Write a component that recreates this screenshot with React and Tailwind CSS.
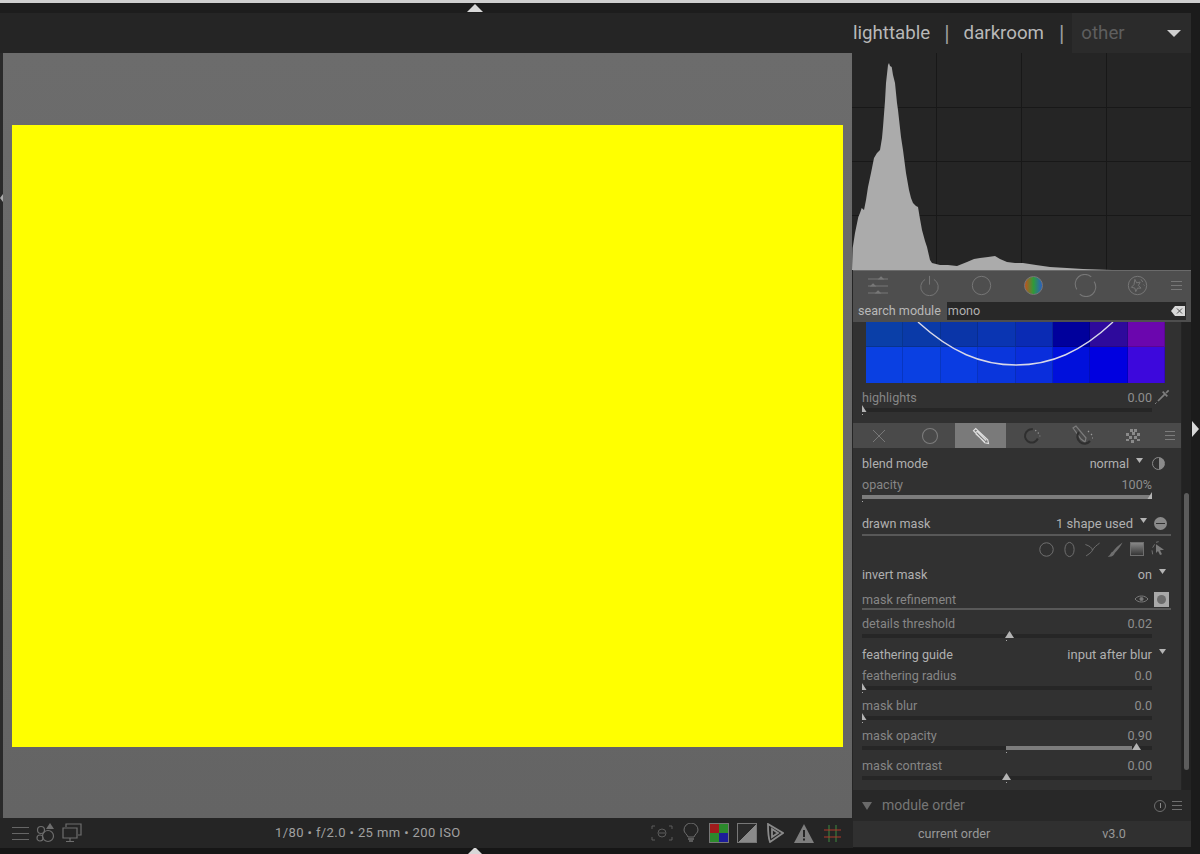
import React from "react";

const ROW1 = ["#0a3fa8", "#0a3aa8", "#0a35a8", "#0a35b2", "#0a2bb4", "#00009c", "#2e0a9c", "#6b06ae"];
const ROW2 = ["#0a40e2", "#0a40e2", "#0a3ce2", "#0a36dc", "#0a2edc", "#0010dc", "#0000e0", "#3d08dc"];

const HIST =
    "M0 217 L0.7 195 L3 180 L6.3 164 L8 160 L9.7 155 L12 157 L14 147 L16 134 L19 120 L22 105 L25 100 L28 97 L30 85 L31 74 L33 48 L34 30 L36 12 L37 10 L38 13 L39.7 14 L41 22 L43 30 L45 50 L46 57 L49 84 L51 97 L54 120 L57 137 L59 145 L61 150 L64 153 L66 154 L68 166 L70 177 L73 188 L75 194 L78 207 L80 210 L84 211 L88 212 L96 212 L105 213 L110 211 L115 209 L122 206 L128 205 L136 204 L143 203 L148 206 L155 209 L163 210 L171 210 L184 212 L198 214 L215 215 L231 216 L260 217 Z";

function Icon({ size = 24, color = "#777", children, fill = "none", sw = 1.2 }) {
    return (
        <svg width={size} height={size} viewBox="0 0 24 24" fill={fill} stroke={color} strokeWidth={sw}>
            {children}
        </svg>
    );
}

function Burger({ color = "#777", width = 11 }) {
    return (
        <div className="flex flex-col gap-[3px]" style={{ width }}>
            <div className="h-[1px]" style={{ backgroundColor: color }} />
            <div className="h-[1px]" style={{ backgroundColor: color }} />
            <div className="h-[1px]" style={{ backgroundColor: color }} />
        </div>
    );
}

function Slider({ label, value, pos, from, to }) {
    const atStart = pos === 0;
    const atEnd = pos === 100;
    const origin = atStart || atEnd ? 0 : 49.8;
    const left = atStart ? "0px" : atEnd ? "calc(100% - 9px)" : `calc(${pos}% - 4.5px)`;
    return (
        <div className="h-[30px] w-[290px] ml-[9px] shrink-0">
            <div className="h-[21px] flex items-center justify-between text-[#868686] pt-[1px]">
                <span>{label}</span>
                <span className="text-[#8e8e8e]">{value}</span>
            </div>
            <div className="relative h-[4px] bg-[#262626]">
                {from !== undefined && (
                    <div
                        className="absolute top-0 h-[4px] bg-[#7c7c7c]"
                        style={{ left: `${from}%`, width: `${to - from}%` }}
                    />
                )}
                <svg className="absolute top-[-3px]" style={{ left }} width="9" height="7" viewBox="0 0 9 7">
                    <path d={atStart ? "M0 0 L4.5 7 L0 7 Z" : atEnd ? "M4.5 7 L9 0 L9 7 Z" : "M4.5 0 L9 7 L0 7 Z"} fill="#b4b4b4" />
                </svg>
                <div className="absolute top-[6px] w-[1px] h-[1px] bg-[#aaa]" style={{ left: `${origin}%` }} />
            </div>
        </div>
    );
}

function Caret({ className }) {
    return (
        <svg className={className} width="7" height="6" viewBox="0 0 7 6">
            <path d="M0 0 H7 L3.5 5 Z" fill="#b4b4b4" />
        </svg>
    );
}

function ModuleTabs() {
    const c = "#7c7c7c";
    return (
        <div className="h-[25px] w-[328px] flex bg-[#4a4a4a] mt-[6px] shrink-0">
            <div className="w-[51px] flex items-center justify-center">
                <Icon size={16} color={c}><path d="M3 3 L21 21 M21 3 L3 21" strokeWidth="1.4" /></Icon>
            </div>
            <div className="w-[51px] flex items-center justify-center">
                <Icon size={18} color={c}><circle cx="12" cy="12" r="10" strokeWidth="1.4" /></Icon>
            </div>
            <div className="w-[51px] flex items-center justify-center bg-[#7a7a7a]">
                <Icon size={18} color="#e0e0e0" sw={1.5}>
                    <path d="M2 5 L5 2 L21 17 L22 22 L17 21 Z M4 8 L8 5 M7 6 L19 18 M5 9 L17 20" />
                </Icon>
            </div>
            <div className="w-[51px] flex items-center justify-center">
                <Icon size={20} color="#2f2f2f" sw={2.4}>
                    <path d="M13 4 A8 8 0 1 0 19 15" />
                    <path d="M16 5 L17 6 M19 8 L20 9 M21 12 L22 12" stroke="#9a9a9a" strokeWidth="1.4" />
                </Icon>
            </div>
            <div className="w-[51px] flex items-center justify-center">
                <Icon size={24} color={c} sw={1.2}>
                    <path d="M2 4 L5 2 L15 14 L14 18 L10 15 Z" />
                    <path d="M8 8 A7 7 0 1 0 19 17" stroke="#2f2f2f" strokeWidth="2.2" />
                    <path d="M17 7 L18 8 M20 10 L21 11 M21 14 L22 14" stroke="#9a9a9a" />
                </Icon>
            </div>
            <div className="w-[51px] flex items-center justify-center pr-[2px]">
                <svg width="16" height="16" viewBox="0 0 16 16" fill="#8a8a8a">
                    <rect x="5" y="1" width="3" height="3" />
                    <rect x="9" y="1" width="3" height="3" />
                    <rect x="1" y="5" width="3" height="3" />
                    <rect x="7" y="4" width="3" height="3" />
                    <rect x="12" y="5" width="3" height="3" />
                    <rect x="4" y="8" width="3" height="3" />
                    <rect x="9" y="8" width="3" height="3" />
                    <rect x="1" y="11" width="3" height="2" />
                    <rect x="12" y="11" width="3" height="2" />
                    <rect x="6" y="12" width="3" height="3" />
                </svg>
            </div>
            <div className="flex-1 flex items-center pl-[6px]">
                <Burger color={c} width={10} />
            </div>
        </div>
    );
}

function MaskIcons() {
    const c = "#6f6f6f";
    return (
        <div className="h-[20px] mt-[3px] w-[309px] ml-[9px] flex items-center justify-end gap-[6px] pr-[5px] shrink-0">
            <Icon size={17} color={c}><circle cx="12" cy="12" r="9.5" strokeWidth="1.4" /></Icon>
            <Icon size={17} color={c}><ellipse cx="12" cy="12" rx="6.5" ry="10" strokeWidth="1.4" /></Icon>
            <Icon size={17} color={c}><path d="M2 5 C8 7 11 9 12 13 C14 9 18 6 22 3 M12 13 C11 16 6 19 3 21" strokeWidth="1.4" /></Icon>
            <Icon size={17} color={c}><path d="M22 2 C16 6 11 11 8 15 L11 17 C15 13 19 8 22 2 Z M8 15 C5 16 5 20 1 22 C6 23 10 21 11 17 Z" fill="#6f6f6f" stroke="none" /></Icon>
            <svg width="14" height="14" viewBox="0 0 14 14">
                <defs>
                    <linearGradient id="maskGrad" x1="0" y1="0" x2="0" y2="1">
                        <stop offset="0" stopColor="#8a8a8a" />
                        <stop offset="1" stopColor="#333" />
                    </linearGradient>
                </defs>
                <rect x="0.5" y="0.5" width="13" height="13" fill="url(#maskGrad)" stroke="#6f6f6f" />
            </svg>
            <Icon size={16} color={c}>
                <path d="M9 5 L21 13 L15 14 L18 20 L15 21 L12 15 L9 18 Z" fill="#7a7a7a" stroke="none" />
                <path d="M4 20 L3 14 M4 10 L7 5 M9 2 L13 1" strokeWidth="1.5" />
            </Icon>
        </div>
    );
}

function ModulePanel() {
    return (
        <div className="flex-1 min-h-0 flex">
            <div className="w-[328px] bg-[#313131] flex flex-col text-[12.6px] text-[#b0b0b0]">
                <div className="relative ml-[13px] w-[299px] shrink-0">
                    <div className="grid grid-cols-8 h-[25px]">
                        {ROW1.map((col, i) => (
                            <div key={i} className="border-r border-b border-[#00000026]" style={{ backgroundColor: col }} />
                        ))}
                    </div>
                    <div className="grid grid-cols-8 h-[36px]">
                        {ROW2.map((col, i) => (
                            <div key={i} className="border-r border-[#00000026]" style={{ backgroundColor: col }} />
                        ))}
                    </div>
                    <svg className="absolute left-0 top-0" width="299" height="61" viewBox="0 0 299 61" fill="none">
                        <path d="M52 0 C85 30 115 43 150 43 S215 30 247 0" stroke="#d8d8e8" strokeWidth="1.4" />
                    </svg>
                </div>

                <div className="mt-[4px] relative">
                    <Slider label="highlights" value="0.00" pos={0} />
                    <div className="absolute left-[301px] top-[2px]">
                        <Icon size={16} color="#7e7e7e" sw={2.6}>
                            <path d="M17 7 L6 18 M13 4 L20 11 M18 6 L22 2" />
                            <path d="M2 22 L3.5 20.5" stroke="#aaa" strokeWidth="1.5" />
                        </Icon>
                    </div>
                </div>

                <ModuleTabs />

                <div className="h-[20px] mt-[5px] ml-[9px] w-[309px] flex items-center pt-[2px] shrink-0">
                    <span>blend mode</span>
                    <span className="ml-auto">normal</span>
                    <Caret className="ml-[7px] mb-[7px]" />
                    <div className="ml-[9px] mr-[6px] mb-[2px] w-[13px] h-[13px] rounded-full border border-[#8a8a8a] bg-[linear-gradient(to_right,#313131_50%,#8a8a8a_50%)]" />
                </div>
                <div className="mt-[1px]">
                    <Slider label="opacity" value="100%" pos={100} from={0} to={100} />
                </div>

                <div className="h-[20px] mt-[9px] ml-[9px] w-[309px] flex items-center pt-[2px] shrink-0">
                    <span>drawn mask</span>
                    <span className="ml-auto text-[13px]">1 shape used</span>
                    <Caret className="ml-[7px] mb-[7px]" />
                    <div className="ml-[7px] mr-[4px] mb-[2px] w-[13px] h-[13px] rounded-full bg-[#8a8a8a] flex items-center justify-center">
                        <div className="w-[9px] h-[1px] bg-[#313131]" />
                    </div>
                </div>
                <div className="h-[2px] mt-[1px] ml-[9px] w-[309px] bg-[#585858] shrink-0" />

                <MaskIcons />

                <div className="h-[20px] mt-[5px] ml-[9px] w-[304px] flex items-center justify-end pt-[2px] shrink-0">
                    <span className="mr-auto">invert mask</span>
                    <span>on</span>
                    <Caret className="ml-[7px] mb-[7px]" />
                </div>

                <div className="h-[18px] mt-[6px] ml-[9px] w-[309px] flex items-center text-[#868686] shrink-0">
                    <span className="pt-[2px]">mask refinement</span>
                    <svg className="ml-auto" width="15" height="10" viewBox="0 0 15 10" fill="none" stroke="#7a7a7a">
                        <path d="M1 5 C4 1 11 1 14 5 C11 9 4 9 1 5 Z" />
                        <circle cx="7.5" cy="5" r="1.6" fill="#7a7a7a" />
                    </svg>
                    <div className="ml-[5px] mr-[2px] w-[15px] h-[15px] bg-[#a8a8a8] flex items-center justify-center">
                        <div className="w-[9px] h-[9px] rounded-full bg-[#6c6c6c]" />
                    </div>
                </div>
                <div className="h-[2px] ml-[9px] w-[309px] bg-[#585858] shrink-0" />

                <div className="mt-[3px]">
                    <Slider label="details threshold" value="0.02" pos={50.7} />
                </div>

                <div className="h-[20px] mt-[1px] ml-[9px] w-[304px] flex items-center justify-end pt-[2px] shrink-0">
                    <span className="mr-auto">feathering guide</span>
                    <span className="text-[13px]">input after blur</span>
                    <Caret className="ml-[7px] mb-[7px]" />
                </div>
                <div className="mt-[1px] flex flex-col">
                    <Slider label="feathering radius" value="0.0" pos={0} />
                    <Slider label="mask blur" value="0.0" pos={0} />
                    <Slider label="mask opacity" value="0.90" pos={94.8} from={49.8} to={93.1} />
                    <Slider label="mask contrast" value="0.00" pos={49.8} />
                </div>
            </div>
            <div className="w-[9px] ml-[1px] bg-[#222222] relative">
                <div className="absolute left-[2px] right-[2px] top-[171px] h-[277px] rounded-full bg-[#5c5c5c]" />
            </div>
            <div className="flex-1 bg-[#2a2a2a]" />
        </div>
    );
}

function TabBar() {
    const c = "#777";
    return (
        <div className="h-[30px] flex border-t border-[#6a6a6a]">
            <div className="w-[50px] flex items-center justify-center">
                <Icon size={24} color={c} sw={1.1}>
                    <path d="M2 5 H22 M2 12 H22 M2 19 H22" />
                    <path d="M15 3 L17 5 L13 5 Z M7 10 L9 12 L5 12 Z M12 17 L14 19 L10 19 Z" fill={c} />
                </Icon>
            </div>
            <div className="w-[52px] flex items-center justify-center">
                <Icon size={21} color={c} sw={1.1}>
                    <path d="M7 5 A10 10 0 1 0 17 5 M12 1 V11" />
                </Icon>
            </div>
            <div className="w-[52px] flex items-center justify-center">
                <Icon size={21} color={c} sw={1.1}><circle cx="12" cy="12" r="10.5" /></Icon>
            </div>
            <div className="w-[52px] flex items-center justify-center">
                <div className="w-[19px] h-[19px] rounded-full border border-[#777] bg-[linear-gradient(to_right,#c0521e,#2f9a3a_50%,#2a5fc0)]" />
            </div>
            <div className="w-[52px] flex items-center justify-center">
                <Icon size={23} color={c} sw={1.1}>
                    <path d="M3 16 A10 10 0 0 1 18 3 M21 8 A10 10 0 0 1 6 21" />
                </Icon>
            </div>
            <div className="w-[52px] flex items-center justify-center">
                <Icon size={21} color={c} sw={1.1}>
                    <circle cx="12" cy="12" r="10.5" />
                    <path d="M9 5 L11 9 L15 8 L13 12 L16 15 L12 15 L10 19 L9 15 L5 14 L8 11 Z" />
                    <path d="M16 5 L18 8 M19 11 L20 12" />
                </Icon>
            </div>
            <div className="flex-1 flex items-center pl-[8px]">
                <Burger color={c} width={11} />
            </div>
        </div>
    );
}

function RightPanel() {
    return (
        <div className="w-[339px] flex flex-col bg-[#252525]">
            <div className="h-[40px] flex items-center text-[18.7px] text-[#b8b8b8] shrink-0">
                <span className="ml-[1px]">lighttable</span>
                <span className="ml-[14px] text-[22px] text-[#a0a0a0] opacity-[0.99]">|</span>
                <span className="ml-[14px]">darkroom</span>
                <span className="ml-[15px] text-[22px] text-[#a0a0a0] opacity-[0.99]">|</span>
                <div className="ml-[8px] flex-1 h-full flex items-center bg-[#2b2b2b] text-[#5e5e5e] pl-[9px]">
                    <span>other</span>
                    <svg className="ml-auto mr-[10px]" width="14" height="7" viewBox="0 0 14 7">
                        <path d="M0 0 H14 L7 7 Z" fill="#cfcfcf" />
                    </svg>
                </div>
            </div>

            <div className="h-[217px] shrink-0">
                <svg width="339" height="217" viewBox="0 0 339 217" className="block">
                    <g stroke="#181818" strokeWidth="1">
                        <path d="M84.5 0 V217 M169.5 0 V217 M254.5 0 V217 M0 54.5 H339 M0 108.5 H339 M0 162.5 H339" />
                    </g>
                    <path d={HIST} fill="#ababab" />
                </svg>
            </div>

            <div className="bg-[#4e4e4e] shrink-0 ml-[1px] w-[338px]">
                <TabBar />
                <div className="h-[22px] flex items-center text-[12.6px] text-[#b8b8b8] pl-[5px]">
                    <span>search module</span>
                    <div className="ml-[6px] w-[239px] h-[18px] bg-[#282828] flex items-center pl-[1px] pr-[1px] text-[#b0b0b0]">
                        <span>mono</span>
                        <svg className="ml-auto" width="14" height="10" viewBox="0 0 14 10">
                            <path d="M0 5 L4 0 H14 V10 H4 Z" fill="#d8d8d8" />
                            <path d="M6 2.5 L11 7.5 M11 2.5 L6 7.5" stroke="#4e4e4e" />
                        </svg>
                    </div>
                </div>
            </div>

            <div className="flex-1 min-h-0 flex flex-col ml-[1px]">
                <ModulePanel />
                <div className="h-[31px] bg-[#282828] flex items-center shrink-0 text-[#767676]">
                    <svg className="ml-[9px]" width="10" height="8" viewBox="0 0 10 8">
                        <path d="M0 0 H10 L5 8 Z" fill="#6a6a6a" />
                    </svg>
                    <span className="ml-[10px] text-[14px]">module order</span>
                    <div className="ml-auto w-[12px] h-[12px] rounded-full border border-[#6e6e6e] flex items-center justify-center">
                        <div className="w-[1px] h-[5px] bg-[#8a8a8a]" />
                    </div>
                    <div className="ml-[6px] mr-[9px]">
                        <Burger color="#6e6e6e" width={10} />
                    </div>
                </div>
                <div className="h-[26px] bg-[#303030] flex items-center text-[12.6px] text-[#989898] shrink-0">
                    <span className="ml-[65px]">current order</span>
                    <span className="ml-[112px]">v3.0</span>
                </div>
                <div className="h-[1px] bg-[#1b1b1b] shrink-0" />
            </div>
        </div>
    );
}

function BottomIcons() {
    return (
        <div className="ml-auto flex items-center mr-[10px]">
            <svg width="22" height="16" viewBox="0 0 22 16" fill="none" stroke="#5c5c5c">
                <path d="M1 4 V1 H4 M18 1 H21 V4 M21 12 V15 H18 M4 15 H1 V12" />
                <circle cx="11" cy="8" r="4" />
                <path d="M8 8 H14" />
            </svg>
            <svg className="ml-[10px]" width="16" height="21" viewBox="0 0 16 21" fill="none" stroke="#6e6e6e">
                <path d="M5 14 C4 11 1 10 1 7 A7 7 0 0 1 15 7 C15 10 12 11 11 14 Z" />
                <path d="M5 16 H11 M6 18 H10" strokeWidth="1.5" />
            </svg>
            <div className="ml-[10px] w-[20px] h-[20px] border border-[#777] grid grid-cols-2">
                <div className="bg-[#a01c1c]" />
                <div className="bg-[#2c8a2c]" />
                <div className="bg-[#2c8a2c]" />
                <div className="bg-[#1c1c9a]" />
            </div>
            <div className="ml-[8px] w-[20px] h-[20px] border border-[#777] bg-[linear-gradient(to_bottom_right,#2a2a2a_50%,#8a8a8a_50%)]" />
            <svg className="ml-[10px]" width="17" height="20" viewBox="0 0 17 20" fill="none" stroke="#8a8a8a" strokeWidth="1.8">
                <path d="M1 1 L16 10 L3 19 C1 14 1 7 1 1 Z" />
                <path d="M5 6 L11 10 L5 14 Z" fill="#252525" />
            </svg>
            <svg className="ml-[10px]" width="20" height="19" viewBox="0 0 20 19">
                <path d="M10 0 L20 19 H0 Z" fill="#7e7e7e" />
                <path d="M9 6 H11 V13 H9 Z M9 14.5 H11 V16.5 H9 Z" fill="#252525" />
            </svg>
            <svg className="ml-[9px]" width="19" height="19" viewBox="0 0 19 19" fill="none">
                <path d="M6 1 V18 M13 1 V18" stroke="#3f8a3f" />
                <path d="M1 6 H18 M1 13 H18" stroke="#b03a2a" />
            </svg>
        </div>
    );
}

function BottomBar() {
    return (
        <div className="h-[30px] bg-[#252525] flex items-center relative shrink-0">
            <div className="ml-[12px] w-[17px]">
                <div className="flex flex-col gap-[5px]">
                    <div className="h-[1px] bg-[#666]" />
                    <div className="h-[1px] bg-[#666]" />
                    <div className="h-[1px] bg-[#666]" />
                </div>
            </div>
            <svg className="ml-[7px]" width="20" height="20" viewBox="0 0 20 20" fill="none" stroke="#6e6e6e" strokeWidth="1.2">
                <circle cx="5" cy="7" r="3.5" />
                <circle cx="4" cy="15" r="3" />
                <circle cx="12" cy="13" r="5.5" />
                <path d="M14 0 L18 6 H10 Z" fill="#6e6e6e" stroke="none" />
            </svg>
            <svg className="ml-[6px]" width="20" height="20" viewBox="0 0 20 20" fill="none" stroke="#6e6e6e" strokeWidth="1.2">
                <path d="M4 4 V1 H19 V12 H16 M1 5 H15 V15 H1 Z M8 15 V18 M4 18.5 H12" />
            </svg>
            <span className="absolute left-[275px] text-[13px] tracking-[0.4px] text-[#a0a0a0]">1/80 • f/2.0 • 25 mm • 200 ISO</span>
            <BottomIcons />
        </div>
    );
}

export default function App() {
    return (
        <div className="w-[1200px] h-[854px] bg-[#1b1b1b] flex flex-col overflow-hidden relative font-['Roboto',sans-serif]">
            <div className="h-[3px] bg-[#cfcfcf] shrink-0" />
            <div className="h-[10px] bg-[#1d1d1d] shrink-0 flex justify-center w-[950px]">
                <svg className="mt-[1px]" width="16" height="8" viewBox="0 0 16 8">
                    <path d="M8 0 L16 8 H0 Z" fill="#d8d8d8" />
                </svg>
            </div>

            <div className="flex h-[835px] shrink-0">
                <div className="w-[852px] flex flex-col shrink-0">
                    <div className="h-[40px] bg-[#252525] shrink-0" />
                    <div className="flex-1 min-h-0 flex">
                        <div className="w-[3px] bg-[#2a2a2a] relative">
                            <svg className="absolute top-[141px] left-0" width="3" height="8" viewBox="0 0 3 8">
                                <path d="M3 0 V8 L0 4 Z" fill="#aaa" />
                            </svg>
                        </div>
                        <div className="flex-1 bg-[linear-gradient(to_bottom,#6c6c6c,#646464)] flex items-center justify-center pt-[1px]">
                            <div className="w-[831px] h-[622px] bg-[#ffff00]" />
                        </div>
                    </div>
                    <BottomBar />
                </div>
                <RightPanel />
                <div className="flex-1 relative">
                    <svg className="absolute left-[1px] top-[408px]" width="7" height="16" viewBox="0 0 7 16">
                        <path d="M0 0 L7 8 L0 16 Z" fill="#d8d8d8" />
                    </svg>
                </div>
            </div>

            <div className="flex-1 bg-[#161616] flex justify-center w-[950px]">
                <svg className="mt-[-1px]" width="16" height="8" viewBox="0 0 16 8">
                    <path d="M8 0 L16 8 H0 Z" fill="#d8d8d8" />
                </svg>
            </div>
        </div>
    );
}
